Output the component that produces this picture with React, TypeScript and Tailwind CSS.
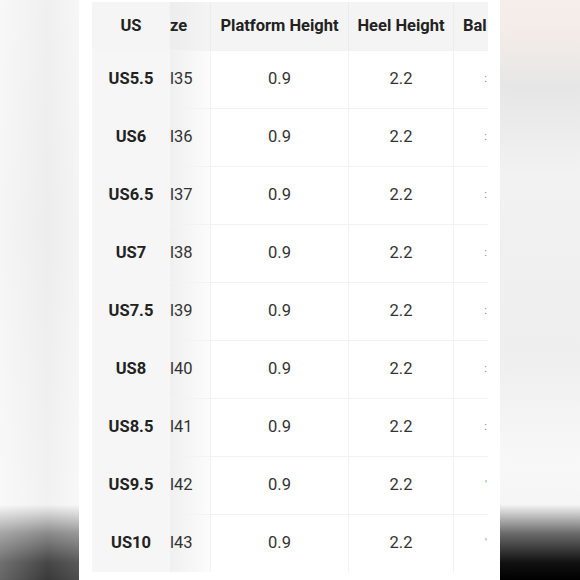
import React from "react";

const rows = [
  { us: "US5.5", eu: "l35", p: "0.9", h: "2.2", b: ":" },
  { us: "US6", eu: "l36", p: "0.9", h: "2.2", b: ":" },
  { us: "US6.5", eu: "l37", p: "0.9", h: "2.2", b: ":" },
  { us: "US7", eu: "l38", p: "0.9", h: "2.2", b: ":" },
  { us: "US7.5", eu: "l39", p: "0.9", h: "2.2", b: ":" },
  { us: "US8", eu: "l40", p: "0.9", h: "2.2", b: ":" },
  { us: "US8.5", eu: "l41", p: "0.9", h: "2.2", b: ":" },
  { us: "US9.5", eu: "l42", p: "0.9", h: "2.2", b: "'" },
  { us: "US10", eu: "l43", p: "0.9", h: "2.2", b: "'" },
];

export default function App() {
  return (
    <div
      className="flex w-[580px] h-[580px] overflow-hidden bg-white"
      style={{ fontFamily: "Roboto, 'Noto Sans', sans-serif" }}
    >
      <div className="w-[79px] h-full bg-[linear-gradient(to_bottom,#f3f3f3_0%,#efefef_40%,#f5f5f5_87%,#6a6a6a_92%,#111_97%,#000_100%)]">
        <div className="h-full w-full bg-[linear-gradient(to_right,rgba(255,255,255,0.4),rgba(230,230,230,0.25)_60%,rgba(255,255,255,0.3))]" />
      </div>
      <div className="w-[421px] h-full bg-white pl-[13px] pt-[2px]">
        <div className="w-[396px] overflow-hidden">
          <div className="grid grid-cols-[78px_40px_138px_105px_35px] text-[16.5px]">
            {/* header */}
            <div className="h-[48px] bg-[#f5f5f5] flex items-center justify-center font-bold text-[#222]">US</div>
            <div className="h-[48px] bg-[linear-gradient(to_right,#ededed,#f4f4f4)] flex items-center font-bold text-[#222]">ze</div>
            <div className="h-[48px] bg-[#f4f4f4] flex items-center justify-center font-bold text-[#222] border-l border-[#ececec]">Platform Height</div>
            <div className="h-[48px] bg-[#f4f4f4] flex items-center justify-center font-bold text-[#222] border-l border-[#ececec]">Heel Height</div>
            <div className="h-[48px] bg-[#f4f4f4] flex items-center pl-[9px] font-bold text-[#222] border-l border-[#ececec]">Bal</div>
            {rows.map((r, i) => (
              <React.Fragment key={i}>
                <div className="h-[58px] bg-[#f6f6f6] flex items-center justify-center font-bold text-[#222]">{r.us}</div>
                <div className="h-[58px] bg-[linear-gradient(to_right,#f0f0f0,#fcfcfc)] flex items-center text-[#333] border-t border-[#f3f3f3]">{r.eu}</div>
                <div className="h-[58px] flex items-center justify-center text-[#333] border-t border-l border-[#f2f2f2]">{r.p}</div>
                <div className="h-[58px] flex items-center justify-center text-[#333] border-t border-l border-[#f2f2f2]">{r.h}</div>
                <div className="h-[58px] flex items-center justify-end pr-[1px] text-[11px] text-[#888] border-t border-l border-[#f2f2f2]">{r.b}</div>
              </React.Fragment>
            ))}
          </div>
        </div>
      </div>
      <div className="w-[80px] h-full bg-[linear-gradient(to_bottom,#f6eeea_0%,#f1ebe8_8%,#e6e6e6_15%,#f2f2f2_30%,#eeeeee_60%,#f8f8f8_80%,#f5f5f5_87%,#6a6a6a_92%,#111_97%,#000_100%)]" />
    </div>
  );
}
